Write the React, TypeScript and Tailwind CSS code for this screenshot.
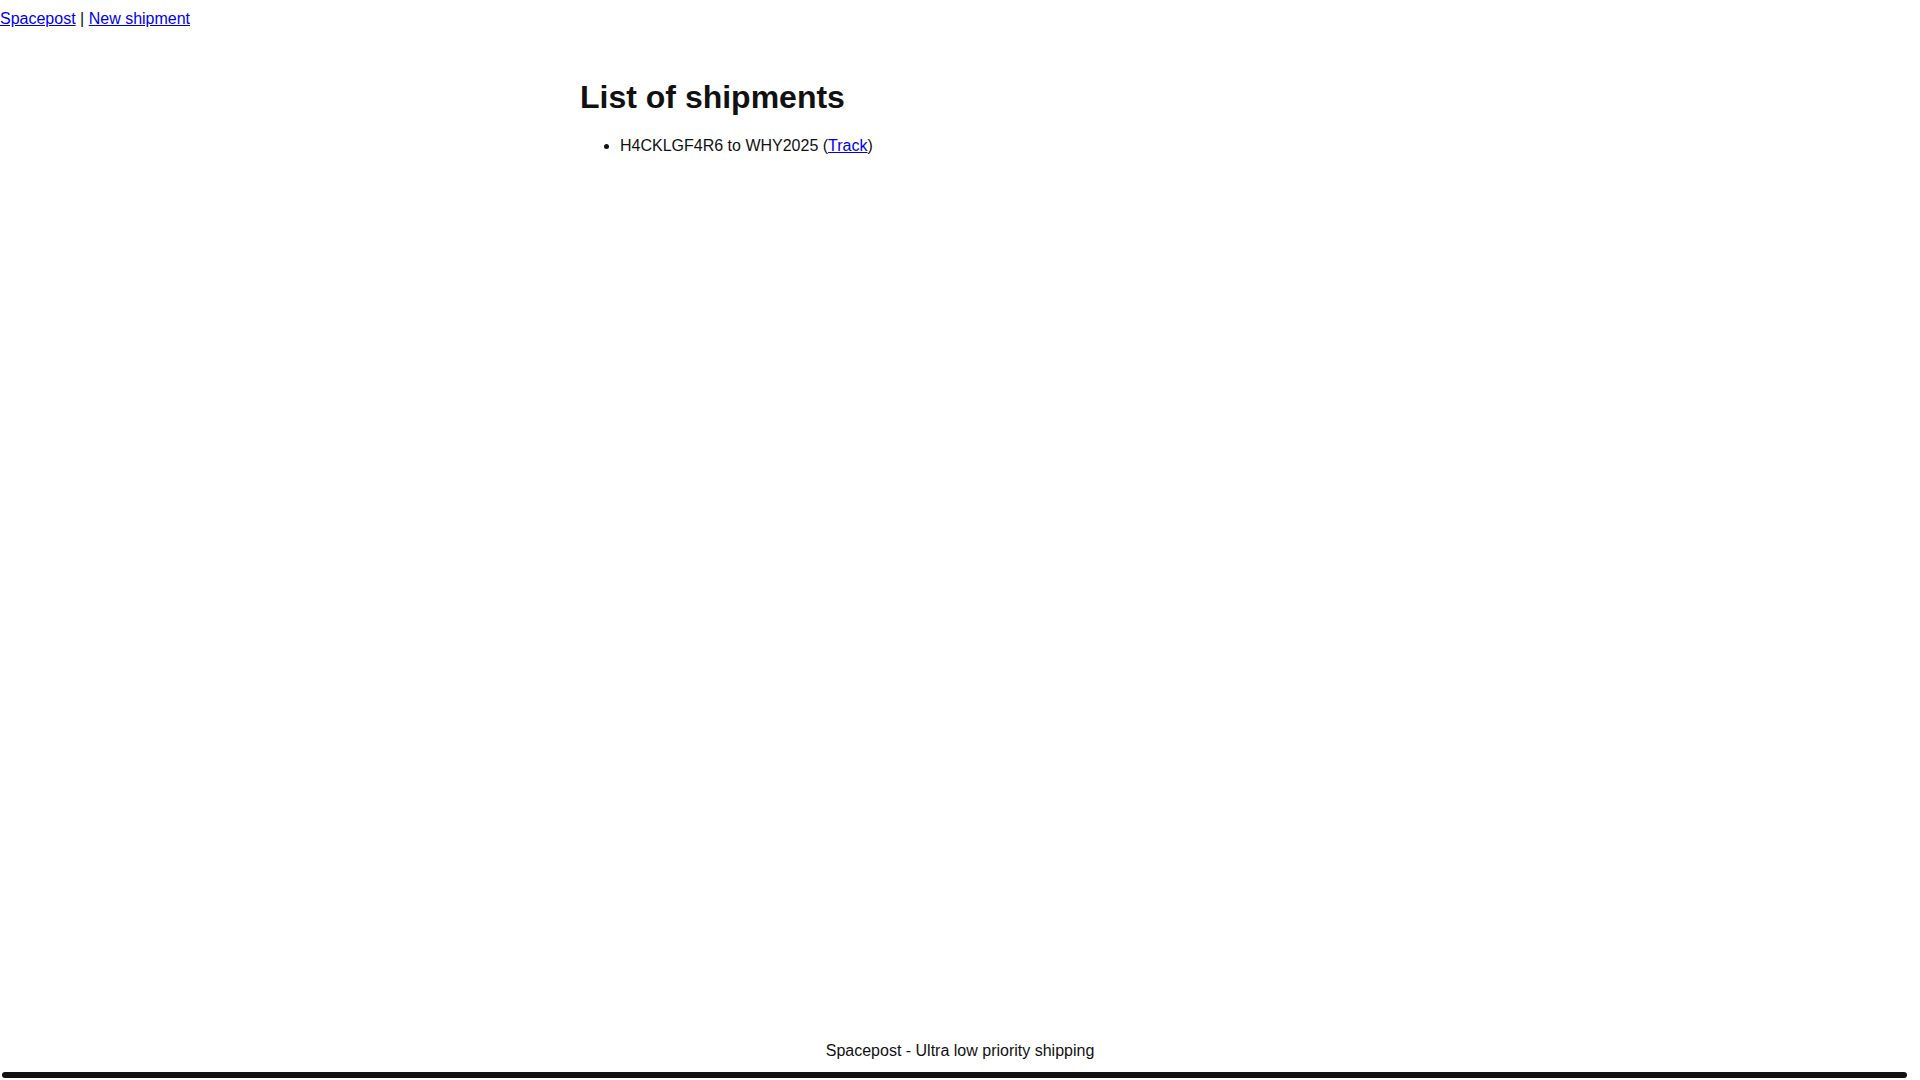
export default function App() {
  return (
    <div className="flex h-screen flex-col bg-white text-[16px] leading-[normal] text-[#111] font-['Liberation_Sans',Arial,sans-serif]">
      <nav className="pt-[10px]">
        <a href="#" className="text-[#0000ee] underline">
          Spacepost
        </a>{' '}
        |{' '}
        <a href="#" className="text-[#0000ee] underline">
          New shipment
        </a>
      </nav>

      <main className="mx-auto w-[760px] flex-1">
        <h1 className="mt-[51px] text-[32px] font-bold leading-[normal]">List of shipments</h1>
        <ul className="mt-[21px] list-disc pl-10">
          <li>
            H4CKLGF4R6 to WHY2025 (
            <a href="#" className="text-[#0000ee] underline">
              Track
            </a>
            )
          </li>
        </ul>
      </main>

      <footer className="pb-[2px]">
        <p className="text-center">Spacepost - Ultra low priority shipping</p>
        <div className="mt-[12px] ml-[2px] mr-[13px] h-[6px] rounded-full bg-[#111]" />
      </footer>
    </div>
  );
}
